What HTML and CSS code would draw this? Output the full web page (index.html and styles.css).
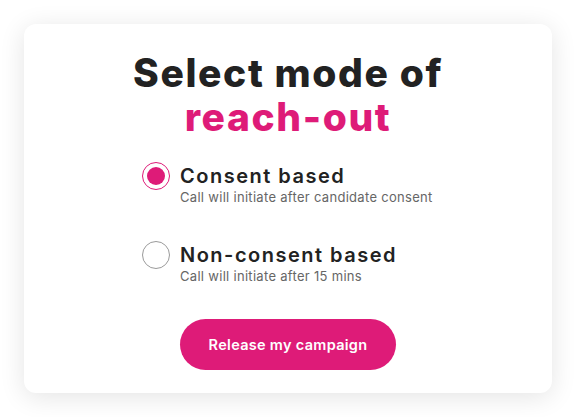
FILE: index.html
```html
<!DOCTYPE html>
<html>
<head>
<meta charset="utf-8">
<link rel="stylesheet" href="styles.css">
</head>
<body>
<div class="card">
  <h1 class="title">Select mode of<br><span class="accent">reach-out</span></h1>
  <div class="options">
    <label class="option">
      <span class="radio checked"><span class="dot"></span></span>
      <span class="text">
        <span class="label">Consent based</span>
        <span class="sub">Call will initiate after candidate consent</span>
      </span>
    </label>
    <label class="option">
      <span class="radio"></span>
      <span class="text">
        <span class="label">Non-consent based</span>
        <span class="sub">Call will initiate after 15 mins</span>
      </span>
    </label>
  </div>
  <button class="btn">Release my campaign</button>
</div>
</body>
</html>
```
FILE: styles.css
```css
* { box-sizing: border-box; }
html, body { margin: 0; background: #fff; }
body {
  padding: 24px;
  font-family: "Inter", "Noto Sans", sans-serif;
  color: #222;
}
.card {
  width: 528px;
  height: 369px;
  background: #fff;
  border-radius: 12px;
  box-shadow: 0 4px 26px rgba(0,0,0,0.11);
  display: flex;
  flex-direction: column;
  align-items: center;
  padding-top: 27px;
}
.title {
  margin: 0;
  font-size: 39px;
  font-weight: 800;
  line-height: 44px;
  text-align: center;
  letter-spacing: 1.6px;
  color: #222;
}
.accent { color: #de1b78; }
.options {
  margin-top: 23px;
  display: flex;
  flex-direction: column;
  gap: 36px;
  width: 292px;
}
.option {
  display: flex;
  align-items: flex-start;
  gap: 10px;
}
.radio {
  width: 28px;
  height: 28px;
  border-radius: 50%;
  border: 1px solid #9a9a9a;
  display: flex;
  align-items: center;
  justify-content: center;
  flex: none;
}
.radio.checked { border: 1.5px solid #de1b78; }
.dot {
  width: 18px;
  height: 18px;
  border-radius: 50%;
  background: #de1b78;
}
.text { display: flex; flex-direction: column; }
.label {
  font-size: 20px;
  font-weight: 600;
  line-height: 28px;
  letter-spacing: 1.5px;
  color: #222;
  white-space: nowrap;
}
.sub {
  margin-top: -1px;
  font-size: 13px;
  color: #666;
  line-height: 16px;
  letter-spacing: 0.3px;
  white-space: nowrap;
}
.btn {
  margin-top: 35px;
  width: 216px;
  height: 51px;
  border: none;
  border-radius: 26px;
  background: #de1b78;
  color: #fff;
  font-family: inherit;
  font-size: 14.5px;
  font-weight: 600;
  letter-spacing: 0.3px;
}
```
